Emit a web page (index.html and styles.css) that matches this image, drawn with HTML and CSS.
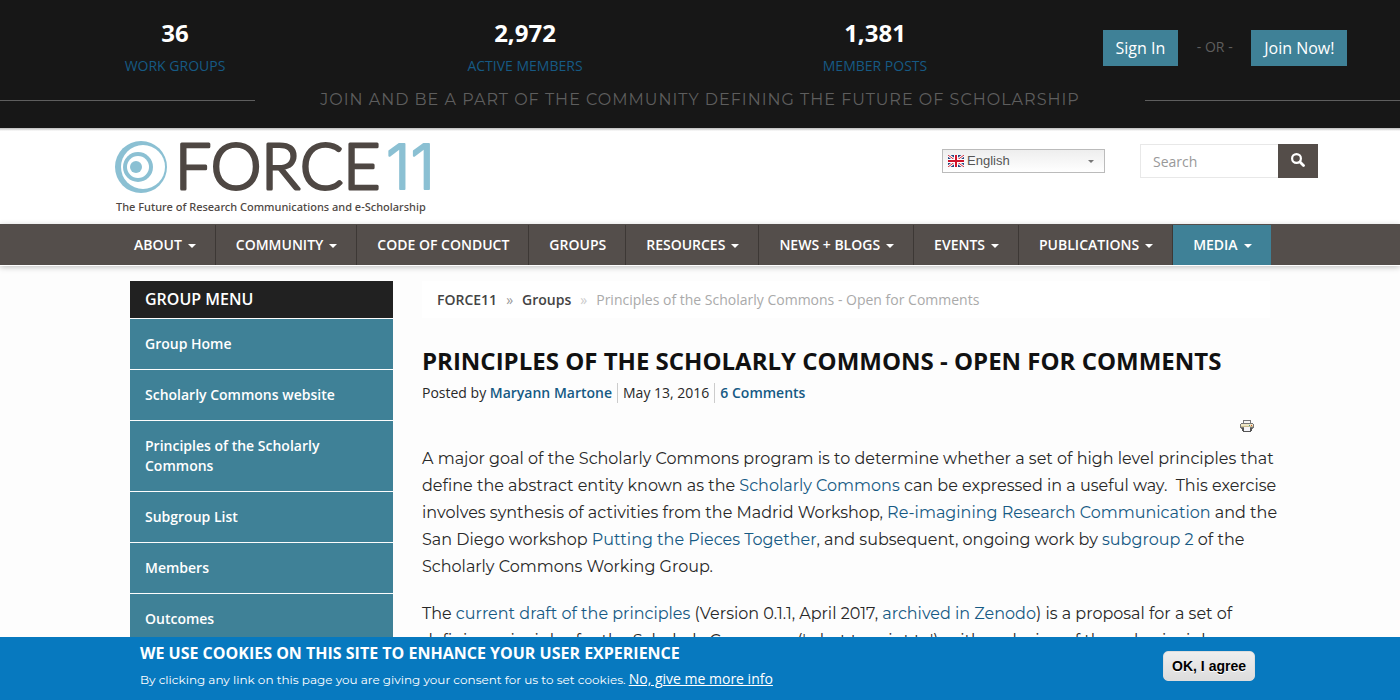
FILE: index.html
```html
<!DOCTYPE html>
<html lang="en">
<head>
<meta charset="utf-8">
<meta name="viewport" content="width=device-width, initial-scale=1">
<title>Principles of the Scholarly Commons - Open for Comments | FORCE11</title>
<link rel="stylesheet" href="styles.css">
</head>
<body>
<section class="promo">
  <div class="stats">
    <div class="stat"><strong class="stat-number">36</strong><a class="stat-label" href="#">WORK GROUPS</a></div>
    <div class="stat"><strong class="stat-number">2,972</strong><a class="stat-label" href="#">ACTIVE MEMBERS</a></div>
    <div class="stat"><strong class="stat-number">1,381</strong><a class="stat-label" href="#">MEMBER POSTS</a></div>
    <div class="account"><a class="btn" href="#">Sign In</a><span class="or">- OR -</span><a class="btn" href="#">Join Now!</a></div>
  </div>
  <p class="tagline"><span>JOIN AND BE A PART OF THE COMMUNITY DEFINING THE FUTURE OF SCHOLARSHIP</span></p>
</section>

<header class="header">
  <a class="logo" href="#" aria-label="FORCE11 home">
    <svg width="320" height="78" viewBox="0 0 320 78">
      <circle cx="26" cy="26" r="26" fill="#8bc0d3"/>
      <circle cx="28" cy="26" r="22" fill="#fff"/>
      <circle cx="23" cy="26" r="15" fill="#8bc0d3"/>
      <circle cx="23" cy="26" r="11" fill="#fff"/>
      <circle cx="21" cy="26" r="6" fill="#8bc0d3"/>
      <text class="logo-word" x="60" y="48">FORCE</text>
      <text class="logo-eleven" x="271" y="48">11</text>
      <text class="logo-motto" x="1" y="70">The Future of Research Communications and e-Scholarship</text>
    </svg>
  </a>
  <div class="tools">
    <div class="language">
      <svg class="flag" width="16" height="12" viewBox="0 0 16 12" aria-hidden="true">
        <rect width="16" height="12" rx="1" fill="#24467f"/>
        <path d="M0 0l16 12M16 0L0 12" stroke="#fff" stroke-width="3"/>
        <path d="M0 0l16 12M16 0L0 12" stroke="#d2293b" stroke-width="1"/>
        <path d="M8 0v12M0 6h16" stroke="#fff" stroke-width="4"/>
        <path d="M8 0v12M0 6h16" stroke="#d0142c" stroke-width="2"/>
      </svg>
      <select class="language-select" aria-label="Language"><option>English</option><option>Français</option></select>
      <span class="language-caret"></span>
    </div>
    <form class="search">
      <input class="search-input" type="search" placeholder="Search" aria-label="Search">
      <button class="search-button" type="button" aria-label="Search">
        <svg width="14" height="14" viewBox="0 0 14 14"><circle cx="5.500" cy="5.500" r="4.400" fill="none" stroke="#fff" stroke-width="2.200"/><path d="M9 9l3.500 3.500" stroke="#fff" stroke-width="2.800" stroke-linecap="round"/></svg>
      </button>
    </form>
  </div>
</header>

<nav class="nav">
  <ul class="nav-list">
    <li><a class="has-menu" href="#">ABOUT</a></li>
    <li><a class="has-menu" href="#">COMMUNITY</a></li>
    <li><a href="#">CODE OF CONDUCT</a></li>
    <li><a href="#">GROUPS</a></li>
    <li><a class="has-menu" href="#">RESOURCES</a></li>
    <li><a class="has-menu" href="#">NEWS + BLOGS</a></li>
    <li><a class="has-menu" href="#">EVENTS</a></li>
    <li><a class="has-menu" href="#">PUBLICATIONS</a></li>
    <li><a class="has-menu active" href="#">MEDIA</a></li>
  </ul>
</nav>

<div class="page">
  <aside class="sidebar">
    <h2 class="menu-title">GROUP MENU</h2>
    <ul class="menu">
      <li><a href="#">Group Home</a></li>
      <li><a href="#">Scholarly Commons website</a></li>
      <li><a href="#">Principles of the Scholarly Commons</a></li>
      <li><a href="#">Subgroup List</a></li>
      <li><a href="#">Members</a></li>
      <li><a href="#">Outcomes</a></li>
    </ul>
  </aside>
  <main class="main">
    <ol class="breadcrumb">
      <li><a href="#">FORCE11</a></li>
      <li><a href="#">Groups</a></li>
      <li>Principles of the Scholarly Commons - Open for Comments</li>
    </ol>
    <h1 class="title">PRINCIPLES OF THE SCHOLARLY COMMONS - OPEN FOR COMMENTS</h1>
    <div class="meta">
      <span>Posted by <a href="#">Maryann Martone</a></span>
      <span>May 13, 2016</span>
      <span><a href="#">6 Comments</a></span>
    </div>
    <div class="print">
      <a href="#" aria-label="Print"><svg width="14" height="12" viewBox="0 0 14 12" shape-rendering="crispEdges">
        <path d="M3 0h8v4H3z" fill="#777"/><path d="M4 1h6v3H4z" fill="#f5f5f5"/>
        <path d="M1 3h12v1h1v4h-1v1H1V8H0V4h1z" fill="#777"/><path d="M1 4h12v3H1z" fill="#eee5c5"/>
        <path d="M1 6h12v1H1z" fill="#c9bd91"/><path d="M9 5h1v1H9z" fill="#3c9b85"/><path d="M11 5h1v1h-1z" fill="#d5572f"/>
        <path d="M2 8h10v3h-1v1H3v-1H2z" fill="#555"/><path d="M4 7h6v4H4z" fill="#f4f4f8"/>
      </svg></a>
    </div>
    <article class="article">
      <p>A major goal of the Scholarly Commons program is to determine whether a set of high level principles that define the abstract entity known as the <a href="#">Scholarly Commons</a> can be expressed in a useful way.&nbsp; This exercise involves synthesis of activities from the Madrid Workshop, <a href="#">Re-imagining Research Communication</a> and the San Diego workshop <a href="#">Putting the Pieces Together</a>, and subsequent, ongoing work by <a href="#">subgroup 2</a> of the Scholarly Commons Working Group.</p>
      <p>The <a href="#">current draft of the principles</a> (Version 0.1.1, April 2017, <a href="#">archived in Zenodo</a>) is a proposal for a set of defining principles for the Scholarly Commons ('what to print to'), with exclusion of the subprinciples</p>
    </article>
  </main>
</div>

<section class="cookies" aria-label="Cookie notice">
  <div class="cookies-inner">
    <div>
      <h2 class="cookies-title">WE USE COOKIES ON THIS SITE TO ENHANCE YOUR USER EXPERIENCE</h2>
      <p class="cookies-text">By clicking any link on this page you are giving your consent for us to set cookies. <a href="#">No, give me more info</a></p>
    </div>
    <button class="agree" type="button">OK, I agree</button>
  </div>
</section>
</body>
</html>
```
FILE: styles.css
```css
* { box-sizing: border-box; }
html, body { height: 100%; }
body {
  margin: 0;
  overflow: hidden;
  background: #fdfdfd;
  color: #282828;
  font: 14px/20px "Open Sans", sans-serif;
}
a { color: #165a84; text-decoration: none; }
ul, ol { margin: 0; padding: 0; list-style: none; }

.promo { padding-bottom: 18px; background: #171717; }
.stats { display: grid; grid-template-columns: repeat(4, 1fr); padding-top: 18px; }
.stat { display: flex; flex-direction: column; align-items: center; }
.stat-number { color: #fff; font-size: 24px; line-height: 30px; }
.stat-label { margin-top: 8px; color: #165a84; }
.account { display: flex; justify-content: center; align-items: flex-start; padding-top: 12px; }
.btn { padding: 8px 13px; background: #3f8197; color: #fff; font-size: 16px; font-weight: 500; }
.or { width: 73px; padding-top: 7px; text-align: center; color: #5e5e5e; }
.tagline {
  display: flex;
  justify-content: space-between;
  align-items: center;
  margin: 14px 0 0;
  color: #5e5e5e;
  font: 16px/20px Montserrat, Inter, sans-serif;
  letter-spacing: 1px;
}
.tagline::before, .tagline::after { content: ""; width: 255px; height: 1px; background: #5e5e5e; }

.header {
  display: flex;
  justify-content: space-between;
  min-height: 96px;
  padding: 13px 82px 0 115px;
  background: linear-gradient(#bbb, #fff 3px);
}
.logo svg { display: block; overflow: visible; }
.logo-word { font: 300 64px Lato, sans-serif; fill: #4e4743; stroke: #4e4743; stroke-width: 3; stroke-linejoin: round; }
.logo-eleven { font: 300 62px Inter, sans-serif; fill: #8bc0d3; stroke: #8bc0d3; stroke-width: 2; stroke-linejoin: round; }
.logo-motto { font: 500 11px "Noto Sans", sans-serif; fill: #4e4743; }
.tools { display: flex; align-items: flex-start; gap: 35px; padding-top: 3px; }
.language { position: relative; margin-top: 5px; }
.language-select {
  appearance: none;
  display: block;
  width: 163px;
  height: 24px;
  padding: 0 24px 2px 24px;
  border: 1px solid #bbb;
  border-radius: 0;
  background: linear-gradient(#eee, #fff);
  color: #555;
  font: 13px "Liberation Sans", sans-serif;
}
.flag { position: absolute; left: 6px; top: 6px; }
.language-caret { position: absolute; right: 11px; top: 11px; border: 3px solid transparent; border-top-color: #777; pointer-events: none; }
.search { display: flex; }
.search-input {
  appearance: none;
  width: 138px;
  height: 34px;
  padding: 0 12px;
  border: 1px solid #e8e8e8;
  border-right: 0;
  background: #fff;
  color: #555;
  font: 14px "Open Sans", sans-serif;
}
.search-input::placeholder { color: #999; }
.search-button { width: 40px; height: 34px; padding: 0; border: 0; background: #544d49; }

.nav { position: relative; background: #544e4b; box-shadow: 0 1px 0 #fff, 0 2px 6px #bbb; }
.nav-list { display: flex; padding: 1px 130px 0 114px; }
.nav-list a {
  display: block;
  padding: 10px 19px 10px 20px;
  border-right: 1px solid #3d3835;
  color: #fff;
  font-weight: 600;
  white-space: nowrap;
}
.nav-list a.active { border-right: 0; background: #3f8197; }
.has-menu::after {
  content: "";
  display: inline-block;
  margin-left: 6px;
  border: 4px solid transparent;
  border-top-color: currentColor;
  border-bottom: 0;
  vertical-align: middle;
}

.page { display: grid; grid-template-columns: 263px 1fr; gap: 29px; padding: 16px 130px 0; }
.menu-title { margin: 0; padding: 8px 15px 9px; background: #212121; color: #fff; font-size: 16px; font-weight: 600; line-height: 20px; }
.menu a { display: block; margin-top: 1px; padding: 15px; background: #3f8197; color: #fff; font-weight: 600; }
.breadcrumb { display: flex; padding: 9px 15px 8px; background: #fff; color: #aaa; }
.breadcrumb a { color: #444; font-weight: 600; }
.breadcrumb li + li::before { content: "»"; padding: 0 9px; color: #999; }
.breadcrumb li:last-child::before { color: #ccc; }
.title { margin: 28px 0 0; color: #111; font-size: 24px; font-weight: 700; line-height: 30px; }
.meta { display: flex; margin-top: 7px; }
.meta span + span { margin-left: 5px; padding-left: 5px; border-left: 1px solid #ccc; }
.meta a { font-weight: 600; }
.print { display: flex; justify-content: flex-end; margin-top: 17px; padding-right: 16px; }
.print svg { display: block; }
.article { margin: 13px -15px 0 0; font: 16px/27px Montserrat, Inter, sans-serif; }
.article p { margin: 0 0 20px; }

.cookies { position: fixed; right: 0; bottom: 0; left: 0; background: #0779bf; color: #fff; }
.cookies-inner { display: flex; justify-content: space-between; align-items: flex-start; padding: 6px 145px 10px 140px; }
.cookies-title { margin: 0; font-size: 16px; font-weight: 700; line-height: 20px; }
.cookies-text { margin: 6px 0 0; font: 12px/20px Montserrat, Inter, sans-serif; }
.cookies-text a { color: #fff; font: 14px/20px "Open Sans", sans-serif; text-decoration: underline; }
.agree {
  margin-top: 8px;
  padding: 0 8px;
  height: 30px;
  border: 1px solid #ddd;
  border-radius: 5px;
  background: linear-gradient(#eee, #ddd);
  color: #000;
  font: bold 14px "Liberation Sans", sans-serif;
  text-shadow: 0 1px 0 #fff;
}
```
